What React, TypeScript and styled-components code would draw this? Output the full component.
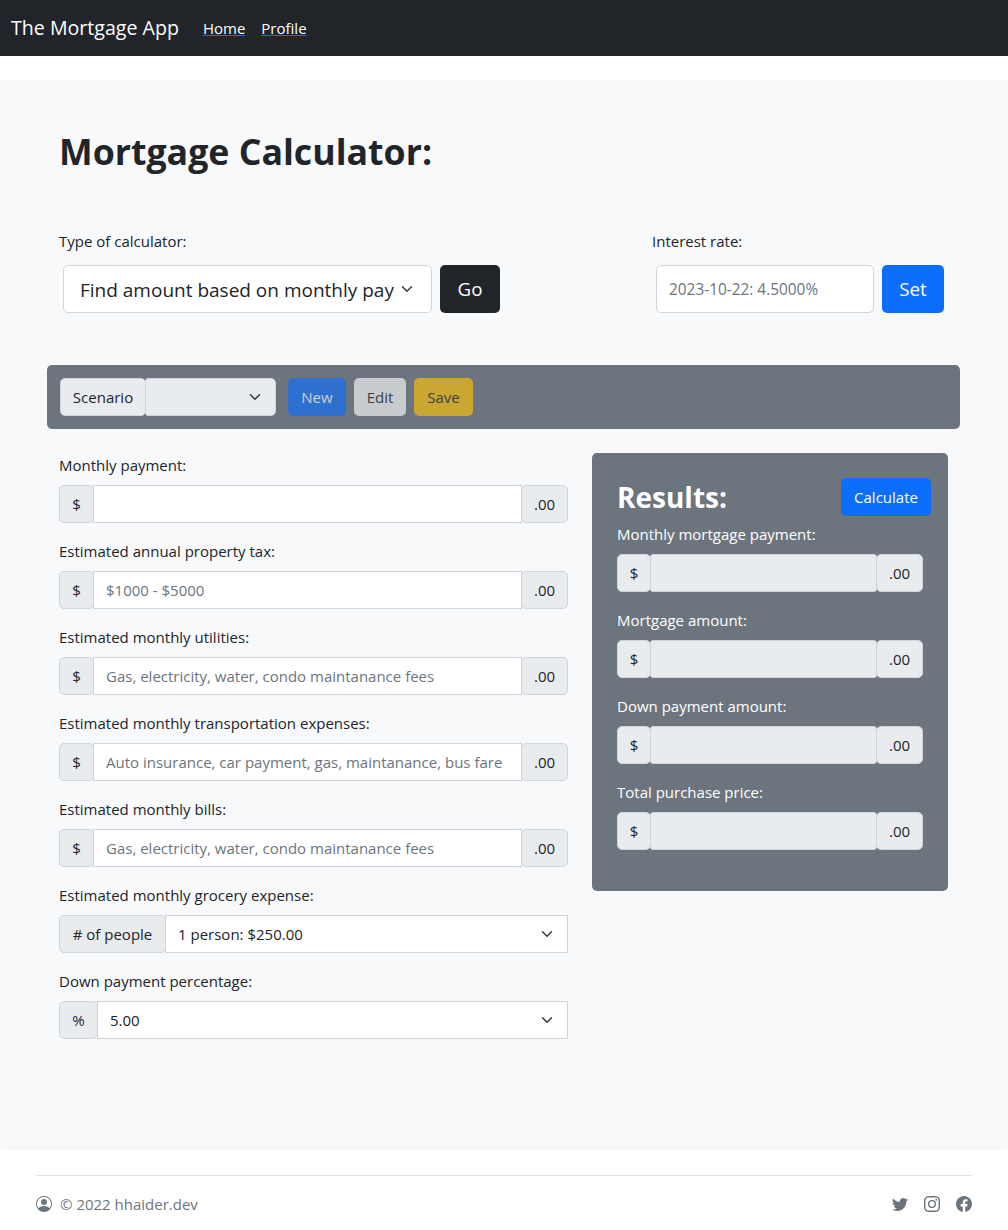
import { FC } from "react";
import styled, { createGlobalStyle } from "styled-components";
import { BsFacebook, BsInstagram, BsPersonCircle, BsTwitter } from "react-icons/bs";

const chevron =
  "url(\"data:image/svg+xml,%3csvg xmlns='http://www.w3.org/2000/svg' viewBox='0 0 16 16'%3e%3cpath fill='none' stroke='%23343a40' stroke-linecap='round' stroke-linejoin='round' stroke-width='2' d='m2 5 6 6 6-6'/%3e%3c/svg%3e\")";

const GlobalStyle = createGlobalStyle`
  * {
    box-sizing: border-box;
  }
  body {
    margin: 0;
    background: #fff;
    color: #212529;
    font-family: "Open Sans", "Liberation Sans", sans-serif;
    font-size: 15px;
    line-height: 24px;
  }
`;

const Navbar = styled.nav`
  height: 56px;
  background: #212529;
  display: flex;
  align-items: center;
  padding-left: 11px;
`;

const Brand = styled.a`
  color: #fff;
  font-size: 19.6px;
  margin-right: 24px;
`;

const NavLink = styled.a`
  color: #fff;
  font-size: 15px;
  margin-right: 16px;
  text-decoration: underline;
  text-decoration-color: #0d6efd;
`;

const Main = styled.main`
  margin-top: 24px;
  height: 1071px;
  background: #f8f9fa;
  border-radius: 5px;
  padding: 47px 48px 0 47px;
`;

const Title = styled.h1`
  margin: 0 0 54px 12px;
  font-size: 35.7px;
  line-height: 48px;
  font-weight: 700;
`;

const TopRow = styled.div`
  display: flex;
  justify-content: space-between;
  padding: 0 16px 0 12px;
  margin-bottom: 52px;
`;

const TopField = styled.div`
  display: flex;
  flex-direction: column;
`;

const TopControls = styled.div`
  display: flex;
  gap: 8px;
  margin: 5px 0 0 4px;
`;

const Label = styled.label<{ $light?: boolean }>`
  display: block;
  color: ${(p) => (p.$light ? "#fff" : "#212529")};
  height: 24px;
  margin-bottom: 7px;
`;

const BigSelect = styled.select`
  appearance: none;
  width: 369px;
  height: 48px;
  padding: 2px 37px 0 16px;
  font: inherit;
  font-size: 19px;
  color: #212529;
  background: #fff ${chevron} no-repeat right 16px center / 16px 12px;
  border: 1px solid #ced4da;
  border-radius: 5px;
`;

const BigInput = styled.input`
  width: 218px;
  height: 48px;
  padding: 0 12px;
  font: inherit;
  font-size: 15.4px;
  background: #fff;
  border: 1px solid #ced4da;
  border-radius: 5px;
  &::placeholder {
    color: #6c757d;
    opacity: 1;
  }
`;

const BigButton = styled.button<{ $bg: string; $w: number }>`
  width: ${(p) => p.$w}px;
  height: 48px;
  padding: 0;
  font: inherit;
  font-size: 18.75px;
  color: #fff;
  background: ${(p) => p.$bg};
  border: 0;
  border-radius: 5px;
`;

const ScenarioBar = styled.div`
  width: 913px;
  height: 64px;
  background: #6c757d;
  border-radius: 5px;
  display: flex;
  align-items: center;
  padding-left: 13px;
  margin-bottom: 24px;
`;

const ScenarioGroup = styled.div`
  display: flex;
  height: 38px;
  width: 216px;
  margin-right: 12px;
`;

const Addon = styled.span<{ $w: number; $end?: boolean }>`
  position: relative;
  z-index: 1;
  flex: none;
  width: ${(p) => p.$w}px;
  display: flex;
  align-items: center;
  justify-content: center;
  white-space: nowrap;
  height: 38px;
  background: #e9ecef;
  border: 1px solid #ced4da;
  border-radius: 5px;
  margin-left: ${(p) => (p.$end ? "-1px" : "0")};
`;

const ScenarioSelect = styled.select`
  appearance: none;
  flex: 1;
  min-width: 0;
  margin-left: -1px;
  font: inherit;
  background: #e9ecef ${chevron} no-repeat right 12px center / 16px 12px;
  border: 1px solid #ced4da;
  border-radius: 3px 5px 5px 3px;
`;

const SmallButton = styled.button<{ $bg: string; $fg: string; $w: number }>`
  width: ${(p) => p.$w}px;
  height: 38px;
  margin-right: 8px;
  padding: 0;
  font: inherit;
  color: ${(p) => p.$fg};
  background: ${(p) => p.$bg};
  border: 0;
  border-radius: 5px;
  opacity: 0.65;
`;

const Columns = styled.div`
  display: flex;
  align-items: flex-start;
`;

const FormColumn = styled.div`
  width: 545px;
  padding: 0 24px 0 12px;
`;

const Field = styled.div`
  margin-bottom: 16px;
`;

const FieldLabel = styled(Label)`
  margin: 0 0 8px;
`;

const Group = styled.div`
  display: flex;
  height: 38px;
`;

const TextInput = styled.input`
  flex: 1;
  min-width: 0;
  height: 38px;
  margin-left: -1px;
  padding: 0 12px;
  font: inherit;
  color: #212529;
  background: #fff;
  border: 1px solid #ced4da;
  border-radius: 0;
  &::placeholder {
    color: #6c757d;
    opacity: 1;
  }
  &:disabled {
    background: #e9ecef;
    border-radius: 3px;
  }
`;

const FormSelect = styled.select`
  appearance: none;
  flex: 1;
  min-width: 0;
  height: 38px;
  margin-left: -1px;
  padding: 0 36px 0 12px;
  font: inherit;
  color: #212529;
  background: #fff ${chevron} no-repeat right 12px center / 16px 12px;
  border: 1px solid #ced4da;
  border-radius: 0;
`;

const ResultsPanel = styled.section`
  width: 356px;
  height: 438px;
  background: #6c757d;
  border-radius: 5px;
  padding: 25px 17px 0 25px;
`;

const ResultsHead = styled.div`
  display: flex;
  justify-content: space-between;
  align-items: center;
  height: 38px;
  margin-bottom: 6px;
`;

const ResultsTitle = styled.h2`
  margin: 0;
  color: #fff;
  font-size: 28px;
  line-height: 38px;
  font-weight: 700;
`;

const CalcButton = styled.button`
  width: 90px;
  height: 38px;
  padding: 0;
  font: inherit;
  color: #fff;
  background: #0d6efd;
  border: 0;
  border-radius: 5px;
`;

const ResultGroup = styled(Group)`
  width: 306px;
`;

const Footer = styled.footer`
  margin: 24px 36px 0;
  border-top: 1px solid #dee2e6;
  padding-top: 16px;
  height: 55px;
  display: flex;
  justify-content: space-between;
  align-items: flex-start;
  color: #6c757d;
`;

const Copyright = styled.div`
  display: flex;
  align-items: center;
  gap: 8px;
  height: 24px;
  font-size: 15px;
`;

const Socials = styled.div`
  display: flex;
  align-items: center;
  gap: 16px;
  height: 24px;
`;

const money = [
  { label: "Monthly payment:", placeholder: "" },
  { label: "Estimated annual property tax:", placeholder: "$1000 - $5000" },
  { label: "Estimated monthly utilities:", placeholder: "Gas, electricity, water, condo maintanance fees" },
  { label: "Estimated monthly transportation expenses:", placeholder: "Auto insurance, car payment, gas, maintanance, bus fare" },
  { label: "Estimated monthly bills:", placeholder: "Gas, electricity, water, condo maintanance fees" },
];

const results = [
  "Monthly mortgage payment:",
  "Mortgage amount:",
  "Down payment amount:",
  "Total purchase price:",
];

const MoneyField: FC<{ label: string; placeholder: string }> = ({ label, placeholder }) => (
  <Field>
    <FieldLabel>{label}</FieldLabel>
    <Group>
      <Addon $w={35}>$</Addon>
      <TextInput placeholder={placeholder} />
      <Addon $w={47} $end>.00</Addon>
    </Group>
  </Field>
);

const App: FC = () => {
  return (
    <>
      <GlobalStyle />
      <Navbar>
        <Brand>The Mortgage App</Brand>
        <NavLink>Home</NavLink>
        <NavLink>Profile</NavLink>
      </Navbar>
      <Main>
        <Title>Mortgage Calculator:</Title>
        <TopRow>
          <TopField>
            <Label>Type of calculator:</Label>
            <TopControls>
              <BigSelect>
                <option>Find amount based on monthly payment</option>
              </BigSelect>
              <BigButton $bg="#212529" $w={60}>Go</BigButton>
            </TopControls>
          </TopField>
          <TopField>
            <Label>Interest rate:</Label>
            <TopControls>
              <BigInput placeholder="2023-10-22: 4.5000%" />
              <BigButton $bg="#0d6efd" $w={62}>Set</BigButton>
            </TopControls>
          </TopField>
        </TopRow>
        <ScenarioBar>
          <ScenarioGroup>
            <Addon $w={86}>Scenario</Addon>
            <ScenarioSelect />
          </ScenarioGroup>
          <SmallButton $bg="#0d6efd" $fg="#fff" $w={58}>New</SmallButton>
          <SmallButton $bg="#f8f9fa" $fg="#212529" $w={52}>Edit</SmallButton>
          <SmallButton $bg="#ffc107" $fg="#212529" $w={59}>Save</SmallButton>
        </ScenarioBar>
        <Columns>
          <FormColumn>
            {money.map((m) => (
              <MoneyField key={m.label} label={m.label} placeholder={m.placeholder} />
            ))}
            <Field>
              <FieldLabel>Estimated monthly grocery expense:</FieldLabel>
              <Group>
                <Addon $w={107}># of people</Addon>
                <FormSelect>
                  <option>1 person: $250.00</option>
                </FormSelect>
              </Group>
            </Field>
            <Field>
              <FieldLabel>Down payment percentage:</FieldLabel>
              <Group>
                <Addon $w={39}>%</Addon>
                <FormSelect>
                  <option>5.00</option>
                </FormSelect>
              </Group>
            </Field>
          </FormColumn>
          <ResultsPanel>
            <ResultsHead>
              <ResultsTitle>Results:</ResultsTitle>
              <CalcButton>Calculate</CalcButton>
            </ResultsHead>
            {results.map((r) => (
              <Field key={r}>
                <FieldLabel $light>{r}</FieldLabel>
                <ResultGroup>
                  <Addon $w={34}>$</Addon>
                  <TextInput disabled />
                  <Addon $w={47} $end>.00</Addon>
                </ResultGroup>
              </Field>
            ))}
          </ResultsPanel>
        </Columns>
      </Main>
      <Footer>
        <Copyright>
          <BsPersonCircle size={16} />
          <span>© 2022 hhaider.dev</span>
        </Copyright>
        <Socials>
          <BsTwitter size={16} />
          <BsInstagram size={16} />
          <BsFacebook size={16} />
        </Socials>
      </Footer>
    </>
  );
};

export default App;
